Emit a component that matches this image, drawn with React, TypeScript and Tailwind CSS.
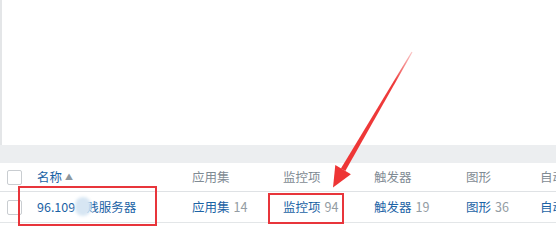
import React from "react";

const font = { fontFamily: '"Noto Sans CJK SC", "Noto Sans", sans-serif' };

function Checkbox() {
  return <div className="w-[15px] h-[15px] border border-[#c9cdd1] rounded-[2px] bg-white" />;
}

function LinkCell({ label, count, width }: { label: string; count?: string; width: string }) {
  return (
    <div className={`${width} shrink-0 whitespace-nowrap`}>
      <span className="text-[#1c63a5]">{label}</span>
      {count && <span className="text-[#939ca3] ml-1">{count}</span>}
    </div>
  );
}

export default function App() {
  return (
    <div className="relative w-[556px] h-[249px] bg-white overflow-hidden text-[12.5px]" style={font}>
      {/* empty upper area */}
      <div className="h-[145px] border-l-2 border-[#e4e6e8]" />
      <div className="h-[18px] bg-[#eceef0]" />

      {/* header row */}
      <div className="flex items-center h-[29px] border-b border-[#dfe2e5] text-[#7f8b94] whitespace-nowrap">
        <div className="w-[37px] shrink-0 pl-[7px]">
          <Checkbox />
        </div>
        <div className="w-[155px] shrink-0 flex items-center gap-[3px]">
          <span className="text-[#1c63a5]">名称</span>
          <span className="text-[8px] text-[#8e979e]">▲</span>
        </div>
        <div className="w-[91px] shrink-0">应用集</div>
        <div className="w-[91px] shrink-0">监控项</div>
        <div className="w-[92px] shrink-0">触发器</div>
        <div className="w-[74px] shrink-0">图形</div>
        <div className="shrink-0">自动发现</div>
      </div>

      {/* data row */}
      <div className="flex items-center h-[31px] border-b border-[#e3e6e8] whitespace-nowrap">
        <div className="w-[37px] shrink-0 pl-[7px]">
          <Checkbox />
        </div>
        <div className="w-[155px] shrink-0 relative flex items-center text-[#1c63a5]">
          <span>96.109</span>
          <span className="inline-block w-[11px]" />
          <span>贱服务器</span>
          <div className="absolute left-[38px] top-[-1px] w-[16px] h-[19px] rounded-full bg-[#d7e6f3] blur-[1.5px]" />
        </div>
        <LinkCell label="应用集" count="14" width="w-[91px]" />
        <LinkCell label="监控项" count="94" width="w-[91px]" />
        <LinkCell label="触发器" count="19" width="w-[92px]" />
        <LinkCell label="图形" count="36" width="w-[74px]" />
        <LinkCell label="自动发现" width="w-[60px]" />
      </div>

      {/* annotation boxes */}
      <div className="absolute left-[18px] top-[186px] w-[139px] h-[40px] border-2 border-[#e8353b]" />
      <div className="absolute left-[268px] top-[193px] w-[76px] h-[31px] border-2 border-[#e8353b]" />

      {/* annotation arrow */}
      <svg className="absolute left-0 top-0" width="556" height="249" viewBox="0 0 556 249">
        <defs>
          <linearGradient id="fade" x1="412" y1="52" x2="340" y2="170" gradientUnits="userSpaceOnUse">
            <stop offset="0" stopColor="#f04545" stopOpacity="0.3" />
            <stop offset="0.25" stopColor="#ee3b3b" />
            <stop offset="1" stopColor="#ee3535" />
          </linearGradient>
        </defs>
        <polygon points="412.5,52.3 411.5,51.7 340.9,168.4 345.3,171" fill="url(#fade)" />
        <polygon points="333,187.5 335.3,165.1 350.9,174.2" fill="#ee3535" />
      </svg>
    </div>
  );
}
